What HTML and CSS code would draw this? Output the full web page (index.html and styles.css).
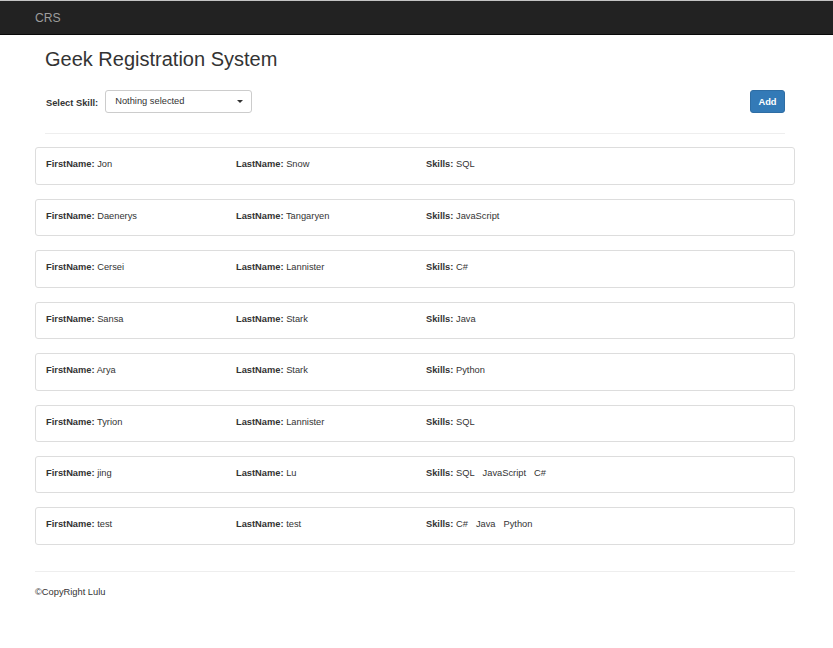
FILE: index.html
```html
<!DOCTYPE html>
<html>
<head>
<meta charset="utf-8">
<title>CRS</title>
<link rel="stylesheet" href="styles.css">
</head>
<body>
<nav class="navbar">
  <div class="container"><span class="brand">CRS</span></div>
</nav>
<main class="container">
  <section class="header">
    <h2 class="title">Geek Registration System</h2>
    <div class="toolbar">
      <label class="field-label">Select Skill:</label>
      <div class="select">
        <span>Nothing selected</span>
        <span class="caret"></span>
      </div>
      <button class="btn">Add</button>
    </div>
    <hr class="divider">
  </section>

  <div class="card">
    <div><b>FirstName:</b> Jon</div>
    <div><b>LastName:</b> Snow</div>
    <div><b>Skills:</b> <span class="skill">SQL</span></div>
  </div>
  <div class="card">
    <div><b>FirstName:</b> Daenerys</div>
    <div><b>LastName:</b> Tangaryen</div>
    <div><b>Skills:</b> <span class="skill">JavaScript</span></div>
  </div>
  <div class="card">
    <div><b>FirstName:</b> Cersei</div>
    <div><b>LastName:</b> Lannister</div>
    <div><b>Skills:</b> <span class="skill">C#</span></div>
  </div>
  <div class="card">
    <div><b>FirstName:</b> Sansa</div>
    <div><b>LastName:</b> Stark</div>
    <div><b>Skills:</b> <span class="skill">Java</span></div>
  </div>
  <div class="card">
    <div><b>FirstName:</b> Arya</div>
    <div><b>LastName:</b> Stark</div>
    <div><b>Skills:</b> <span class="skill">Python</span></div>
  </div>
  <div class="card">
    <div><b>FirstName:</b> Tyrion</div>
    <div><b>LastName:</b> Lannister</div>
    <div><b>Skills:</b> <span class="skill">SQL</span></div>
  </div>
  <div class="card">
    <div><b>FirstName:</b> jing</div>
    <div><b>LastName:</b> Lu</div>
    <div><b>Skills:</b> <span class="skill">SQL</span><span class="skill">JavaScript</span><span class="skill">C#</span></div>
  </div>
  <div class="card">
    <div><b>FirstName:</b> test</div>
    <div><b>LastName:</b> test</div>
    <div><b>Skills:</b> <span class="skill">C#</span><span class="skill">Java</span><span class="skill">Python</span></div>
  </div>

  <footer class="footer">
    <hr class="footer-line">
    <p class="copy">&copy;CopyRight Lulu</p>
  </footer>
</main>
</body>
</html>
```

FILE: styles.css
```css
* { box-sizing: border-box; }
body {
  margin: 0;
  font-family: "Liberation Sans", Arial, sans-serif;
  font-size: 9.3px;
  line-height: 14px;
  color: #333;
  background: #fff;
}
.container {
  width: 760px;
  margin-left: 35px;
}
.navbar {
  height: 35px;
  background: #222;
  border-top: 1px solid #c4c4c4;
  border-bottom: 1px solid #080808;
}
.navbar .container {
  height: 33px;
  display: flex;
  align-items: center;
}
.brand {
  color: #9d9d9d;
  font-size: 12.2px;
  line-height: 14px;
}
.header {
  padding: 0 10px;
}
.title {
  margin: 0;
  padding-top: 13px;
  font-size: 20px;
  line-height: 23px;
  font-weight: 500;
  color: #333;
}
.toolbar {
  display: flex;
  align-items: center;
  margin-top: 19px;
  height: 23px;
}
.field-label {
  font-weight: 700;
  margin-left: 1px;
  margin-right: 7px;
  padding-top: 3px;
}
.select {
  width: 147px;
  height: 23px;
  border: 1px solid #ccc;
  border-radius: 3px;
  display: flex;
  align-items: center;
  justify-content: space-between;
  padding: 0 8px 2px 9px;
  color: #333;
}
.caret {
  width: 0;
  height: 0;
  border-left: 3px solid transparent;
  border-right: 3px solid transparent;
  border-top: 3px solid #333;
  margin-top: 2px;
}
.btn {
  margin-left: auto;
  width: 35px;
  height: 23px;
  padding: 0;
  background: #337ab7;
  border: 1px solid #2e6da4;
  border-radius: 3px;
  color: #fff;
  font-family: inherit;
  font-size: 9.3px;
  font-weight: 700;
}
.divider {
  margin: 20px 0 0;
  border: 0;
  border-top: 1px solid #eee;
}
.card {
  margin-top: 13.4px;
  height: 37.43px;
  border: 1px solid #ddd;
  border-radius: 3px;
  padding: 9px 10px 7px;
  display: grid;
  grid-template-columns: 190px 190px 1fr;
}
.card + .card { margin-top: 14px; }
.card b { font-weight: 700; }
.skill { margin-right: 8px; }
.footer-line {
  margin: 26.5px 0 0;
  border: 0;
  border-top: 1px solid #eee;
}
.copy {
  margin: 13px 0 0;
}
```
